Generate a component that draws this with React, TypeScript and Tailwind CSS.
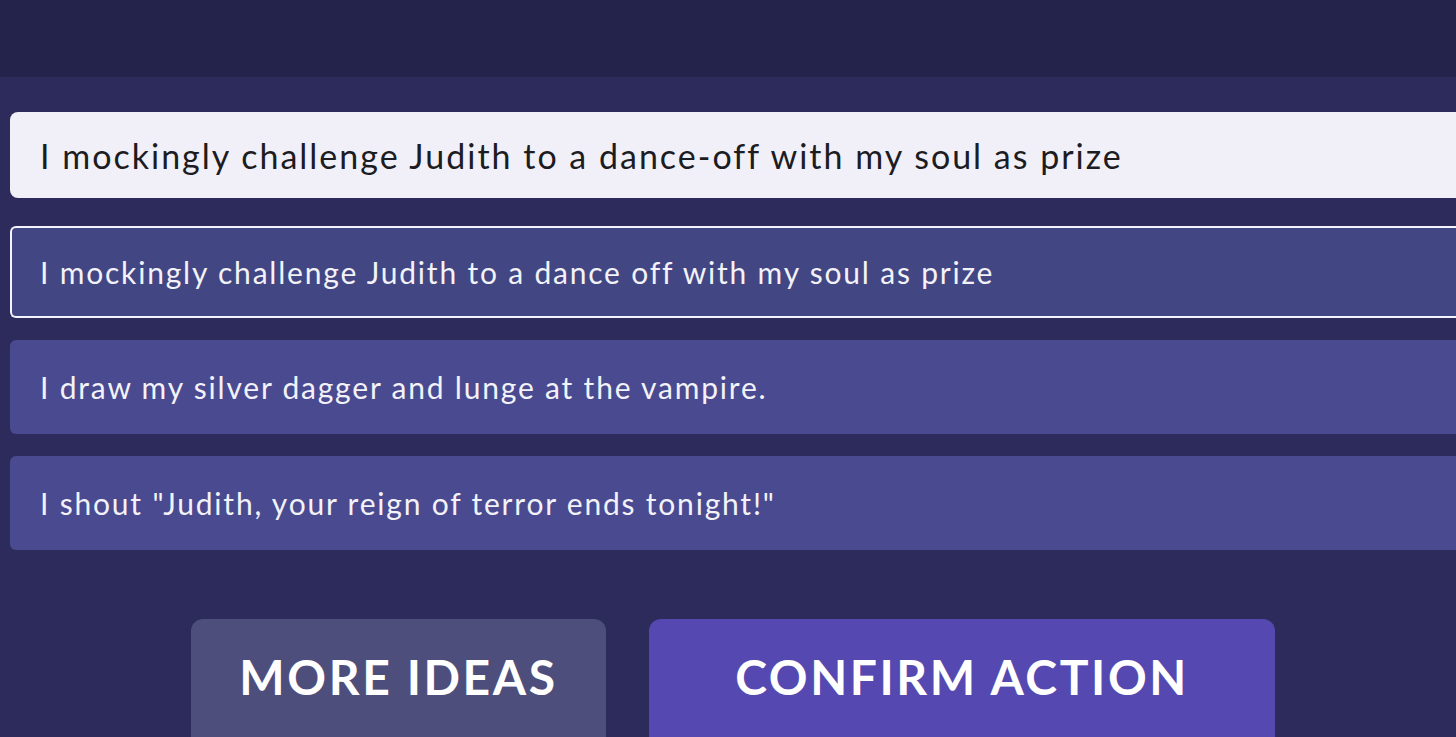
import React from 'react';

const options = [
  'I mockingly challenge Judith to a dance off with my soul as prize',
  'I draw my silver dagger and lunge at the vampire.',
  'I shout "Judith, your reign of terror ends tonight!"',
];

export default function App() {
  return (
    <div
      className="w-[1456px] h-[737px] overflow-hidden bg-[#2c2b5b] flex flex-col"
      style={{ fontFamily: 'Lato, "Open Sans", sans-serif' }}
    >
      {/* top bar */}
      <div className="h-[77px] shrink-0 bg-[#23234b]" />

      <div className="flex flex-col pl-[10px] pt-[35px]">
        {/* typed action */}
        <div className="h-[86px] rounded-l-[8px] bg-[#f1f0f8] flex items-center pl-[30px]">
          <span className="text-[34px] text-[#1c1c22] tracking-[2px]">
            I mockingly challenge Judith to a dance-off with my soul as prize
          </span>
        </div>

        {/* suggestions */}
        <div className="flex flex-col gap-[22px] mt-[28px]">
          {options.map((text, i) => (
            <div
              key={i}
              className={
                i === 0
                  ? 'h-[92px] rounded-l-[6px] border-2 border-r-0 border-[#f4f4fb] bg-[#424683] flex items-center pl-[28px]'
                  : 'h-[94px] rounded-l-[6px] bg-[#4a4a90] flex items-center pl-[30px]'
              }
            >
              <span className="text-[30px] text-[#f2f2f8] tracking-[1.8px]">{text}</span>
            </div>
          ))}
        </div>

        {/* action buttons */}
        <div className="flex gap-[43px] mt-[69px] pl-[181px]">
          <button className="w-[415px] h-[130px] rounded-[12px] bg-[#4e4e7c] text-white text-[48px] font-bold tracking-[2.6px] pb-[14px]">
            MORE IDEAS
          </button>
          <button className="w-[626px] h-[130px] rounded-[12px] bg-[#5549b1] text-white text-[48px] font-bold tracking-[2.6px] pb-[14px]">
            CONFIRM ACTION
          </button>
        </div>
      </div>
    </div>
  );
}
